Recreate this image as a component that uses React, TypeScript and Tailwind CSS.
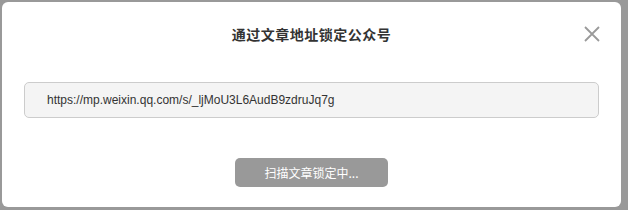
const FONT = "font-['Liberation_Sans','Noto_Sans_CJK_SC',sans-serif]";
const CJK = "font-['Noto_Sans_CJK_SC',sans-serif]";

export default function App() {
  return (
    <div className={`h-[210px] w-[628px] overflow-hidden bg-[#999999] pl-[2px] pt-[2px] ${FONT}`}>
      <div className="relative h-[205px] w-[619px] rounded-[6px] bg-white">
        <h2 className={`pt-[20px] text-center text-[14px] leading-[24px] font-bold tracking-[0.5px] text-[#333333] ${CJK}`}>
          通过文章地址锁定公众号
        </h2>

        <button className="absolute right-[21px] top-[24px] text-[#9a9a9a]" aria-label="close">
          <svg width="16" height="16" viewBox="0 0 16 16" fill="none" stroke="currentColor" strokeWidth="1.8">
            <path d="M1 1 L15 15 M15 1 L1 15" />
          </svg>
        </button>

        <div className="mx-[22px] mt-[36px] flex h-[36px] items-center rounded-[5px] border border-[#cccccc] bg-[#f4f4f4] pl-[22px] text-[12px] text-[#333333]">
          https://mp.weixin.qq.com/s/_ljMoU3L6AudB9zdruJq7g
        </div>

        <div className="mt-[40px] flex justify-center">
          <button className={`h-[29px] w-[153px] rounded-[5px] bg-[#999999] text-[12px] text-white ${CJK}`}>
            扫描文章锁定中...
          </button>
        </div>
      </div>
    </div>
  );
}
